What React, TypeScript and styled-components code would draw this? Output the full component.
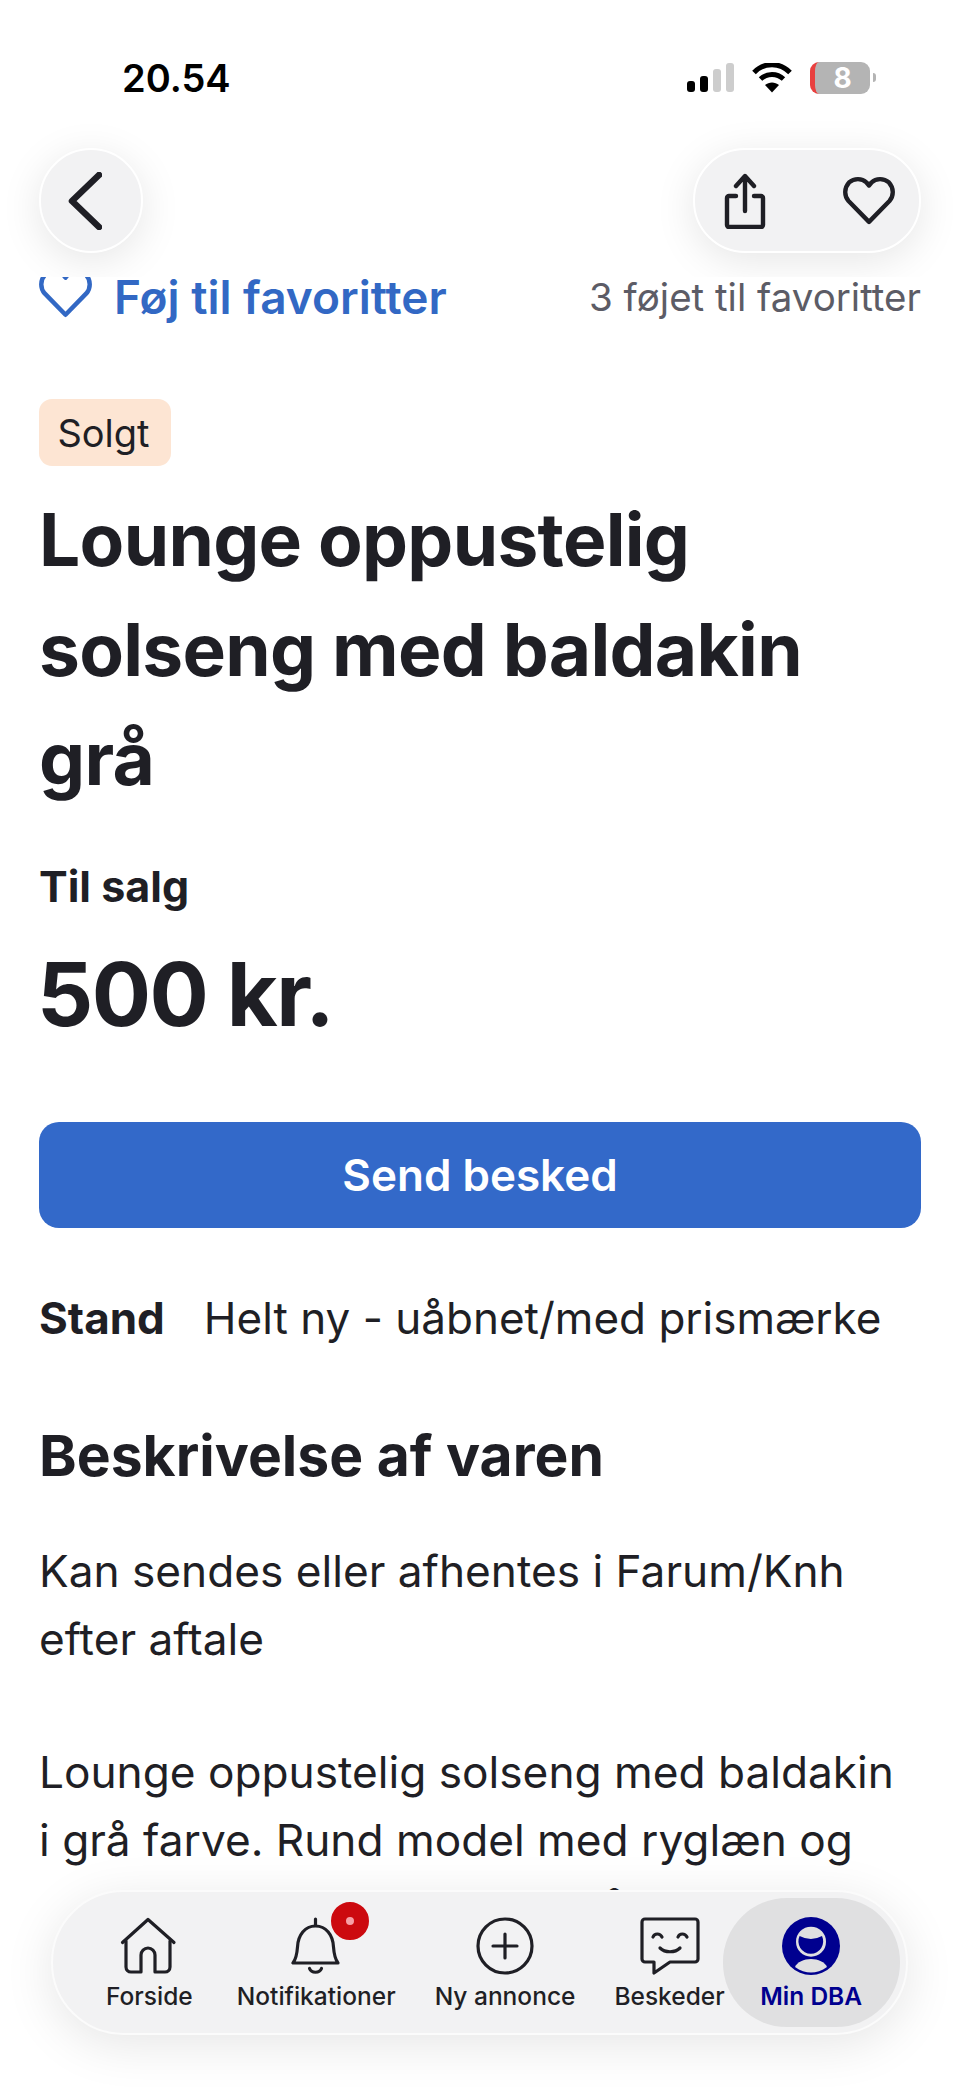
import styled, { createGlobalStyle } from "styled-components";

const GlobalStyle = createGlobalStyle`
  html, body {
    margin: 0;
    padding: 0;
    background: #fff;
  }
  * {
    box-sizing: border-box;
  }
`;

function HomeIcon() {
  return (
    <svg width="58" height="58" viewBox="0 0 58 58" fill="none" stroke="#1f1f25" strokeWidth="3.2" strokeLinejoin="round" strokeLinecap="round">
      <path d="M2.5 25.5 28 2.5 54 25.5" />
      <path d="M6 24v26a5 5 0 0 0 5 5h10V38a7 7 0 0 1 14 0v17h10a5 5 0 0 0 5-5V24" />
    </svg>
  );
}

function BellIcon() {
  return (
    <svg width="50" height="58" viewBox="0 0 50 58" fill="none" stroke="#1f1f25" strokeWidth="3.2" strokeLinecap="round" strokeLinejoin="round">
      <path d="M2 46h45c-3-4-4-9-4.500-16C42 18 35 9 24.500 9S7 18 6.500 30C6 37 5 42 2 46Z" />
      <path d="M24.500 2v6" />
      <path d="M18.500 51.500c2 5 10 5 12 0" />
    </svg>
  );
}

function PlusIcon() {
  return (
    <svg width="58" height="58" viewBox="0 0 58 58" fill="none" stroke="#1f1f25" strokeWidth="3.200" strokeLinecap="round">
      <circle cx="29" cy="29" r="27" />
      <path d="M29 17v24M17 29h24" />
    </svg>
  );
}

function MessageIcon() {
  return (
    <svg width="60" height="58" viewBox="0 0 60 58" fill="none" stroke="#1f1f25" strokeWidth="3.200" strokeLinecap="round" strokeLinejoin="round">
      <path d="M5 2h50a3 3 0 0 1 3 3v37a3 3 0 0 1-3 3H30L14 56v-11H5a3 3 0 0 1-3-3V5a3 3 0 0 1 3-3Z" />
      <path d="M13 20c1.500-4 7-4 9 0M38 20c1.500-4 7-4 9 0" />
      <path d="M20 31c5 5 15 5 20 0" />
    </svg>
  );
}

function AvatarIcon() {
  return (
    <svg width="58" height="58" viewBox="0 0 58 58">
      <circle cx="29" cy="29" r="29" fill="#00008f" />
      <circle cx="29" cy="24.700" r="15" fill="#e0e0e1" />
      <path d="M17.600 19Q29 25 40 19A12.400 12.400 0 1 1 17.600 19Z" fill="#00008f" />
      <path d="M13 50C15 45 22 42 29 42S43 45 45 50C40 54 34 55.500 29 55.500S18 54 13 50Z" fill="#e0e0e1" />
    </svg>
  );
}

function BackIcon() {
  return (
    <svg width="34" height="58" viewBox="0 0 34 58" fill="none" stroke="#1f1f25" strokeWidth="6.500" strokeLinecap="round" strokeLinejoin="round">
      <path d="M31 3 4 29l27 26" />
    </svg>
  );
}

function ShareIcon() {
  return (
    <svg width="52" height="56" viewBox="0 0 52 56" fill="none" stroke="#1f1f25" strokeWidth="4.400" strokeLinecap="round" strokeLinejoin="round">
      <path d="M17 23H10a2 2 0 0 0-2 2v27a2 2 0 0 0 2 2h32a2 2 0 0 0 2-2V25a2 2 0 0 0-2-2h-7" />
      <path d="M26 38V4M17 13l9-10 9 10" />
    </svg>
  );
}

function HeartIcon({ color = "#1f1f25", size = 52 }: { color?: string; size?: number }) {
  return (
    <svg width={size} height={size * 0.94} viewBox="0 0 52 49" fill="none" stroke={color} strokeWidth="4.400" strokeLinejoin="round" strokeLinecap="round">
      <path d="M26 46 5.500 25C1 20 1 12 6 6.500 11 2 19 2 23.500 6.500L26 9.500l2.500-3C33 2 41 2 46 6.500 51 12 51 20 46.500 25Z" />
    </svg>
  );
}

function WifiIcon() {
  return (
    <svg width="40" height="30" viewBox="0 0 40 30" fill="none" stroke="#000" strokeWidth="5">
      <path d="M2 9.500C12-1 28-1 38 9.500" />
      <path d="M8.500 16c6.500-6 16.500-6 23 0" />
      <path d="M20 29.500 13 22c4-3.500 10-3.500 14 0Z" fill="#000" stroke="none" />
    </svg>
  );
}

const navItems = [
  { label: "Forside", icon: <HomeIcon /> },
  { label: "Notifikationer", icon: <BellIcon />, badge: true },
  { label: "Ny annonce", icon: <PlusIcon /> },
  { label: "Beskeder", icon: <MessageIcon /> },
];

const signalBars = [
  { height: 11, on: true },
  { height: 16, on: true },
  { height: 23, on: false },
  { height: 29, on: false },
];

function App() {
  return (
    <Page>
      <GlobalStyle />
      <Header>
        <StatusBar>
          <Time>20.54</Time>
          <StatusIcons>
            <Signal>
              {signalBars.map((bar, index) => (
                <SignalBar key={index} $height={bar.height} $on={bar.on} />
              ))}
            </Signal>
            <WifiIcon />
            <Battery>
              <BatteryBody>8</BatteryBody>
              <BatteryCap />
            </Battery>
          </StatusIcons>
        </StatusBar>
        <Controls>
          <RoundButton>
            <BackIcon />
          </RoundButton>
          <PillButton>
            <ShareIcon />
            <HeartIcon />
          </PillButton>
        </Controls>
      </Header>

      <Content>
        <FavoriteRow>
          <FavoriteLink>
            <HeartIcon color="#3268c4" size={53} />
            <span>Føj til favoritter</span>
          </FavoriteLink>
          <FavoriteCount>3 føjet til favoritter</FavoriteCount>
        </FavoriteRow>
        <Badge>Solgt</Badge>
        <Title>Lounge oppustelig solseng med baldakin grå</Title>
        <Category>Til salg</Category>
        <Price>500 kr.</Price>
        <SendButton>Send besked</SendButton>
        <Condition>
          <strong>Stand</strong>
          <span>Helt ny - uåbnet/med prismærke</span>
        </Condition>
        <Heading>Beskrivelse af varen</Heading>
        <Body>
          Kan sendes eller afhentes i Farum/Knh
          <br />
          efter aftale
        </Body>
        <Body>
          Lounge oppustelig solseng med baldakin
          <br />i grå farve. Rund model med ryglæn og
          <br />
          og en stor baldakin, som står
        </Body>
      </Content>

      <Footer>
        <Nav>
          {navItems.map((item) => (
            <NavItem key={item.label}>
              <NavIcon>
                {item.icon}
                {item.badge && <NavBadge />}
              </NavIcon>
              <NavLabel>{item.label}</NavLabel>
            </NavItem>
          ))}
          <ActiveItem>
            <NavIcon>
              <AvatarIcon />
            </NavIcon>
            <ActiveLabel>Min DBA</ActiveLabel>
          </ActiveItem>
        </Nav>
      </Footer>
    </Page>
  );
}

const Page = styled.div`
  position: relative;
  width: 960px;
  height: 2087px;
  overflow: hidden;
  background: #fff;
  color: #1f1f25;
  font-family: Inter, "Liberation Sans", sans-serif;
`;

const Header = styled.header`
  position: absolute;
  top: 0;
  left: 0;
  right: 0;
  z-index: 2;
  height: 277px;
  overflow: hidden;
  background: #fff;
`;

const StatusBar = styled.div`
  display: flex;
  justify-content: space-between;
  align-items: center;
  height: 61px;
  margin-top: 47px;
  padding: 0 84px 0 122px;
`;

const Time = styled.div`
  font-size: 38px;
  font-weight: 600;
  color: #000;
`;

const StatusIcons = styled.div`
  display: flex;
  align-items: center;
  gap: 18px;
`;

const Signal = styled.div`
  display: flex;
  align-items: flex-end;
  gap: 5px;
  height: 29px;
`;

const SignalBar = styled.div<{ $height: number; $on: boolean }>`
  width: 8px;
  height: ${(p) => p.$height}px;
  border-radius: 3px;
  background: ${(p) => (p.$on ? "#000" : "#cdcdcd")};
`;

const Battery = styled.div`
  display: flex;
  align-items: center;
  gap: 3px;
`;

const BatteryBody = styled.div`
  width: 60px;
  height: 32px;
  border-radius: 9px;
  border-left: 5px solid #e9403f;
  background: #b4b4b4;
  color: #fff;
  font-size: 28px;
  font-weight: 700;
  line-height: 32px;
  text-align: center;
`;

const BatteryCap = styled.div`
  width: 3px;
  height: 9px;
  border-radius: 0 3px 3px 0;
  background: #b4b4b4;
`;

const Controls = styled.div`
  display: flex;
  justify-content: space-between;
  margin-top: 40px;
  padding: 0 39px 0 39px;
`;

const RoundButton = styled.div`
  display: flex;
  align-items: center;
  justify-content: center;
  width: 104px;
  height: 105px;
  padding-right: 12px;
  border: 2px solid #fff;
  border-radius: 52px;
  background: #f2f2f3;
  box-shadow: 0 8px 40px rgba(0, 0, 0, 0.1);
`;

const PillButton = styled(RoundButton)`
  justify-content: space-between;
  width: 228px;
  padding: 0 24px;
`;

const Content = styled.main`
  padding: 277px 39px 0;
`;

const FavoriteRow = styled.div`
  display: flex;
  justify-content: space-between;
  align-items: center;
  height: 40px;
`;

const FavoriteLink = styled.div`
  display: flex;
  align-items: center;
  gap: 22px;
  color: #3268c4;
  font-size: 46px;
  font-weight: 600;

  svg {
    margin-top: -8px;
  }
`;

const FavoriteCount = styled.div`
  color: #5c5c66;
  font-size: 38.5px;
`;

const Badge = styled.div`
  display: flex;
  align-items: center;
  justify-content: center;
  width: 132px;
  height: 67px;
  margin-top: 82px;
  padding-right: 3px;
  border-radius: 13px;
  background: #fde5d3;
  font-size: 38px;
`;

const Title = styled.h1`
  margin: 19px 0 0;
  font-size: 73px;
  font-weight: 700;
  letter-spacing: -0.7px;
  line-height: 109.500px;
`;

const Category = styled.div`
  margin-top: 42px;
  font-size: 43px;
  font-weight: 700;
  line-height: 60px;
`;

const Price = styled.div`
  margin-top: 23px;
  margin-left: -2px;
  font-size: 88px;
  font-weight: 700;
  letter-spacing: -1.500px;
  line-height: 110px;
`;

const SendButton = styled.div`
  display: flex;
  align-items: center;
  justify-content: center;
  height: 106px;
  margin-top: 73px;
  border-radius: 20px;
  background: #3369c9;
  color: #fff;
  font-size: 44px;
  font-weight: 600;
`;

const Condition = styled.div`
  display: flex;
  gap: 39px;
  margin-top: 60px;
  font-size: 44px;
  line-height: 60px;

  strong {
    font-weight: 700;
  }
`;

const Heading = styled.h2`
  margin: 68px 0 0;
  font-size: 57px;
  font-weight: 700;
  line-height: 80px;
`;

const Body = styled.p`
  margin: 48px 0 0;
  font-size: 44.200px;
  line-height: 68px;
  white-space: nowrap;

  ${Heading} + & {
    margin-top: 41px;
  }

  & + & {
    margin-top: 65px;
  }
`;

const Footer = styled.footer`
  position: absolute;
  top: 1890px;
  left: 0;
  right: 0;
  bottom: 0;
  z-index: 2;
  padding: 0 52px 0 51px;
  background: #fff;
`;

const Nav = styled.nav`
  display: flex;
  gap: 39px;
  height: 145px;
  padding: 6px 6px 6px 53px;
  border: 2px solid #fbfbfb;
  border-radius: 73px;
  background: #f2f2f3;
  box-shadow: 0 10px 50px rgba(0, 0, 0, 0.1);
`;

const NavItem = styled.div`
  display: flex;
  flex: none;
  flex-direction: column;
  align-items: center;
  padding-top: 19px;

  &:first-child {
    margin-right: 5px;
  }
`;

const NavIcon = styled.div`
  position: relative;
  display: flex;
  align-items: center;
  height: 58px;
`;

const NavBadge = styled.div`
  position: absolute;
  top: -15px;
  left: 40px;
  width: 38px;
  height: 38px;
  border-radius: 50%;
  border: 15px solid #cc0a0f;
  background: #f7a0a6;
`;

const NavLabel = styled.div`
  margin-top: 5px;
  font-size: 24.500px;
  font-weight: 500;
  line-height: 32px;
  white-space: nowrap;
`;

const ActiveItem = styled(NavItem)`
  width: 177px;
  margin-left: -41px;
  border-radius: 64px;
  background: #e0e0e1;
`;

const ActiveLabel = styled(NavLabel)`
  color: #00008f;
  font-weight: 600;
`;

export default App;
